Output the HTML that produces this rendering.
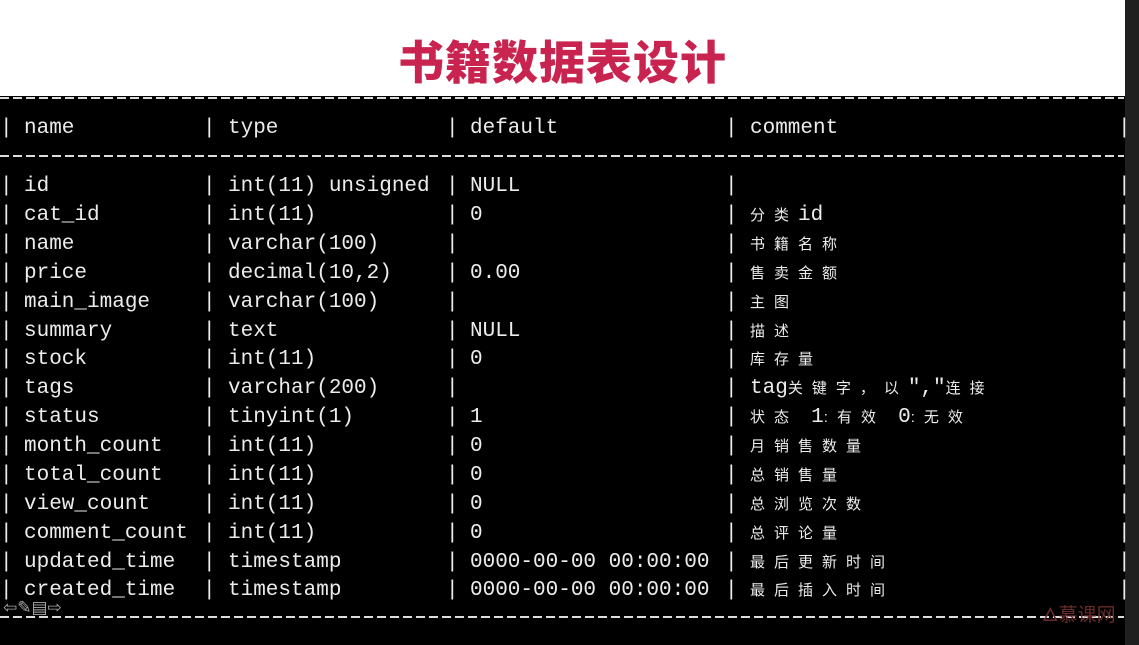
<!DOCTYPE html>
<html><head><meta charset="utf-8"><style>
html,body{margin:0;padding:0;}
body{width:1139px;height:645px;position:relative;background:#000;overflow:hidden;font-family:"Liberation Mono","Noto Sans CJK SC",monospace;color:#ececec;}
.top{position:absolute;left:0;top:0;width:1125px;height:96px;background:#fff;}
.strip{position:absolute;left:1125px;top:0;width:14px;height:645px;background:#1f1f1f;}
.title{position:absolute;left:0;width:1125px;top:30px;text-align:center;font-family:"Noto Sans CJK SC",sans-serif;font-weight:900;font-size:46px;line-height:60px;color:#c92450;letter-spacing:1px;}
.dash{position:absolute;left:0;width:1124px;height:2px;background:repeating-linear-gradient(90deg,#ddd 0 9px,transparent 9px 13px);}
.row{position:absolute;left:0;width:1125px;height:28px;line-height:28px;font-size:21px;white-space:pre;}
.row span{position:absolute;top:0;}
.c{font-size:15px;letter-spacing:9px;font-family:"Liberation Sans","Noto Sans CJK SC",sans-serif;}
.c b{font-weight:normal;font-family:"Liberation Mono",monospace;font-size:21px;letter-spacing:0}
</style></head><body>
<div class="top"></div>
<div class="strip"></div>
<div class="title">书籍数据表设计</div>
<div class="dash" style="top:97px"></div>
<div class="dash" style="top:155px"></div>
<div class="dash" style="top:616px"></div>

<div class="row" style="top:115px"><span style="left:0">|</span><span style="left:24px">name</span><span style="left:203px">|</span><span style="left:228px">type</span><span style="left:446px">|</span><span style="left:470px">default</span><span style="left:725px">|</span><span style="left:750px">comment</span><span style="left:1118px">|</span></div>

<div class="row" style="top:173px"><span style="left:0">|</span><span style="left:24px">id</span><span style="left:203px">|</span><span style="left:228px">int(11) unsigned</span><span style="left:446px">|</span><span style="left:470px">NULL</span><span style="left:725px">|</span><span style="left:1118px">|</span></div>
<div class="row" style="top:202px"><span style="left:0">|</span><span style="left:24px">cat_id</span><span style="left:203px">|</span><span style="left:228px">int(11)</span><span style="left:446px">|</span><span style="left:470px">0</span><span style="left:725px">|</span><span class="c" style="left:750px">分类<b>id</b></span><span style="left:1118px">|</span></div>
<div class="row" style="top:231px"><span style="left:0">|</span><span style="left:24px">name</span><span style="left:203px">|</span><span style="left:228px">varchar(100)</span><span style="left:446px">|</span><span style="left:725px">|</span><span class="c" style="left:750px">书籍名称</span><span style="left:1118px">|</span></div>
<div class="row" style="top:260px"><span style="left:0">|</span><span style="left:24px">price</span><span style="left:203px">|</span><span style="left:228px">decimal(10,2)</span><span style="left:446px">|</span><span style="left:470px">0.00</span><span style="left:725px">|</span><span class="c" style="left:750px">售卖金额</span><span style="left:1118px">|</span></div>
<div class="row" style="top:289px"><span style="left:0">|</span><span style="left:24px">main_image</span><span style="left:203px">|</span><span style="left:228px">varchar(100)</span><span style="left:446px">|</span><span style="left:725px">|</span><span class="c" style="left:750px">主图</span><span style="left:1118px">|</span></div>
<div class="row" style="top:318px"><span style="left:0">|</span><span style="left:24px">summary</span><span style="left:203px">|</span><span style="left:228px">text</span><span style="left:446px">|</span><span style="left:470px">NULL</span><span style="left:725px">|</span><span class="c" style="left:750px">描述</span><span style="left:1118px">|</span></div>
<div class="row" style="top:346px"><span style="left:0">|</span><span style="left:24px">stock</span><span style="left:203px">|</span><span style="left:228px">int(11)</span><span style="left:446px">|</span><span style="left:470px">0</span><span style="left:725px">|</span><span class="c" style="left:750px">库存量</span><span style="left:1118px">|</span></div>
<div class="row" style="top:375px"><span style="left:0">|</span><span style="left:24px">tags</span><span style="left:203px">|</span><span style="left:228px">varchar(200)</span><span style="left:446px">|</span><span style="left:725px">|</span><span class="c" style="left:750px"><b>tag</b>关键字，以<b>","</b>连接</span><span style="left:1118px">|</span></div>
<div class="row" style="top:404px"><span style="left:0">|</span><span style="left:24px">status</span><span style="left:203px">|</span><span style="left:228px">tinyint(1)</span><span style="left:446px">|</span><span style="left:470px">1</span><span style="left:725px">|</span><span class="c" style="left:750px">状态 <b>1</b>:有效 <b>0</b>:无效</span><span style="left:1118px">|</span></div>
<div class="row" style="top:433px"><span style="left:0">|</span><span style="left:24px">month_count</span><span style="left:203px">|</span><span style="left:228px">int(11)</span><span style="left:446px">|</span><span style="left:470px">0</span><span style="left:725px">|</span><span class="c" style="left:750px">月销售数量</span><span style="left:1118px">|</span></div>
<div class="row" style="top:462px"><span style="left:0">|</span><span style="left:24px">total_count</span><span style="left:203px">|</span><span style="left:228px">int(11)</span><span style="left:446px">|</span><span style="left:470px">0</span><span style="left:725px">|</span><span class="c" style="left:750px">总销售量</span><span style="left:1118px">|</span></div>
<div class="row" style="top:491px"><span style="left:0">|</span><span style="left:24px">view_count</span><span style="left:203px">|</span><span style="left:228px">int(11)</span><span style="left:446px">|</span><span style="left:470px">0</span><span style="left:725px">|</span><span class="c" style="left:750px">总浏览次数</span><span style="left:1118px">|</span></div>
<div class="row" style="top:520px"><span style="left:0">|</span><span style="left:24px">comment_count</span><span style="left:203px">|</span><span style="left:228px">int(11)</span><span style="left:446px">|</span><span style="left:470px">0</span><span style="left:725px">|</span><span class="c" style="left:750px">总评论量</span><span style="left:1118px">|</span></div>
<div class="row" style="top:549px"><span style="left:0">|</span><span style="left:24px">updated_time</span><span style="left:203px">|</span><span style="left:228px">timestamp</span><span style="left:446px">|</span><span style="left:470px">0000-00-00 00:00:00</span><span style="left:725px">|</span><span class="c" style="left:750px">最后更新时间</span><span style="left:1118px">|</span></div>
<div class="row" style="top:577px"><span style="left:0">|</span><span style="left:24px">created_time</span><span style="left:203px">|</span><span style="left:228px">timestamp</span><span style="left:446px">|</span><span style="left:470px">0000-00-00 00:00:00</span><span style="left:725px">|</span><span class="c" style="left:750px">最后插入时间</span><span style="left:1118px">|</span></div>

<div style="position:absolute;left:3px;top:598px;font-size:17px;color:#aaa;font-family:'DejaVu Sans',sans-serif;">⇦✎▤⇨</div>
<div style="position:absolute;left:1042px;top:593px;font-size:19px;color:#6a2a2a;font-family:'Noto Sans CJK SC',sans-serif;">🜂慕课网</div>
</body></html>
